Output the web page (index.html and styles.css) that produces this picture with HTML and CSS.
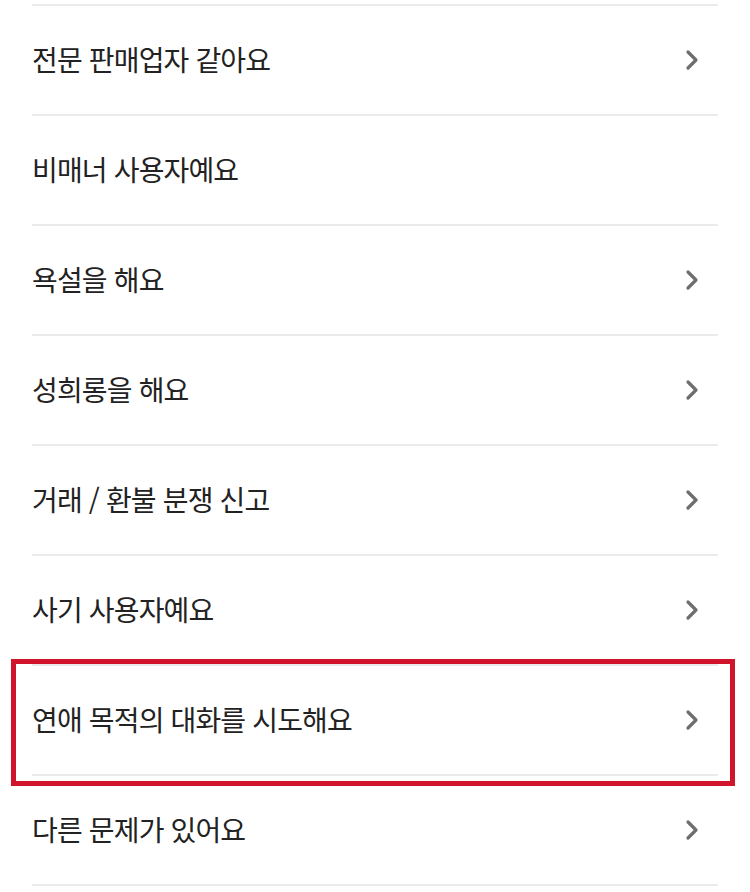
FILE: index.html
```html
<!DOCTYPE html>
<html lang="ko">
<head>
  <meta charset="UTF-8" />
  <meta name="viewport" content="width=device-width, initial-scale=1.0" />
  <title>신고하기</title>
  <link rel="stylesheet" href="styles.css">
</head>
<body>
  <ul class="report-list">
    <li class="report-item">
      <span>전문 판매업자 같아요</span>
      <svg class="chevron" viewBox="0 0 14 22"><polyline points="3,3 11,11 3,19" /></svg>
    </li>
    <li class="report-item">
      <span>비매너 사용자예요</span>
    </li>
    <li class="report-item">
      <span>욕설을 해요</span>
      <svg class="chevron" viewBox="0 0 14 22"><polyline points="3,3 11,11 3,19" /></svg>
    </li>
    <li class="report-item">
      <span>성희롱을 해요</span>
      <svg class="chevron" viewBox="0 0 14 22"><polyline points="3,3 11,11 3,19" /></svg>
    </li>
    <li class="report-item">
      <span>거래 / 환불 분쟁 신고</span>
      <svg class="chevron" viewBox="0 0 14 22"><polyline points="3,3 11,11 3,19" /></svg>
    </li>
    <li class="report-item">
      <span>사기 사용자예요</span>
      <svg class="chevron" viewBox="0 0 14 22"><polyline points="3,3 11,11 3,19" /></svg>
    </li>
    <li class="report-item highlight">
      <span>연애 목적의 대화를 시도해요</span>
      <svg class="chevron" viewBox="0 0 14 22"><polyline points="3,3 11,11 3,19" /></svg>
    </li>
    <li class="report-item">
      <span>다른 문제가 있어요</span>
      <svg class="chevron" viewBox="0 0 14 22"><polyline points="3,3 11,11 3,19" /></svg>
    </li>
  </ul>
</body>
</html>
```

FILE: styles.css
```css
body {
  margin: 0;
  padding: 0;
  background-color: #fff;
  font-family: "Noto Sans CJK KR", "Noto Sans", sans-serif;
  color: #222;
}

.report-list {
  list-style: none;
  margin: 4px 0 0;
  padding: 0 32px;
}

.report-item {
  position: relative;
  display: flex;
  justify-content: space-between;
  align-items: center;
  height: 108px;
  border-top: 2px solid #ebebeb;
  font-size: 28px;
  letter-spacing: -0.85px;
  line-height: 1;
}

.report-item span {
  padding-bottom: 2px;
}

.report-item:last-child {
  border-bottom: 2px solid #ebebeb;
}

.chevron {
  width: 14px;
  height: 22px;
  margin-right: 19px;
  fill: none;
  stroke: #6e6e6e;
  stroke-width: 3.2;
  stroke-linecap: round;
  stroke-linejoin: round;
}

/* 강조 박스 */
.highlight::after {
  content: "";
  position: absolute;
  top: -7px;
  left: -21px;
  right: -17px;
  bottom: -12px;
  border: 5px solid #d0142c;
  pointer-events: none;
}
```
